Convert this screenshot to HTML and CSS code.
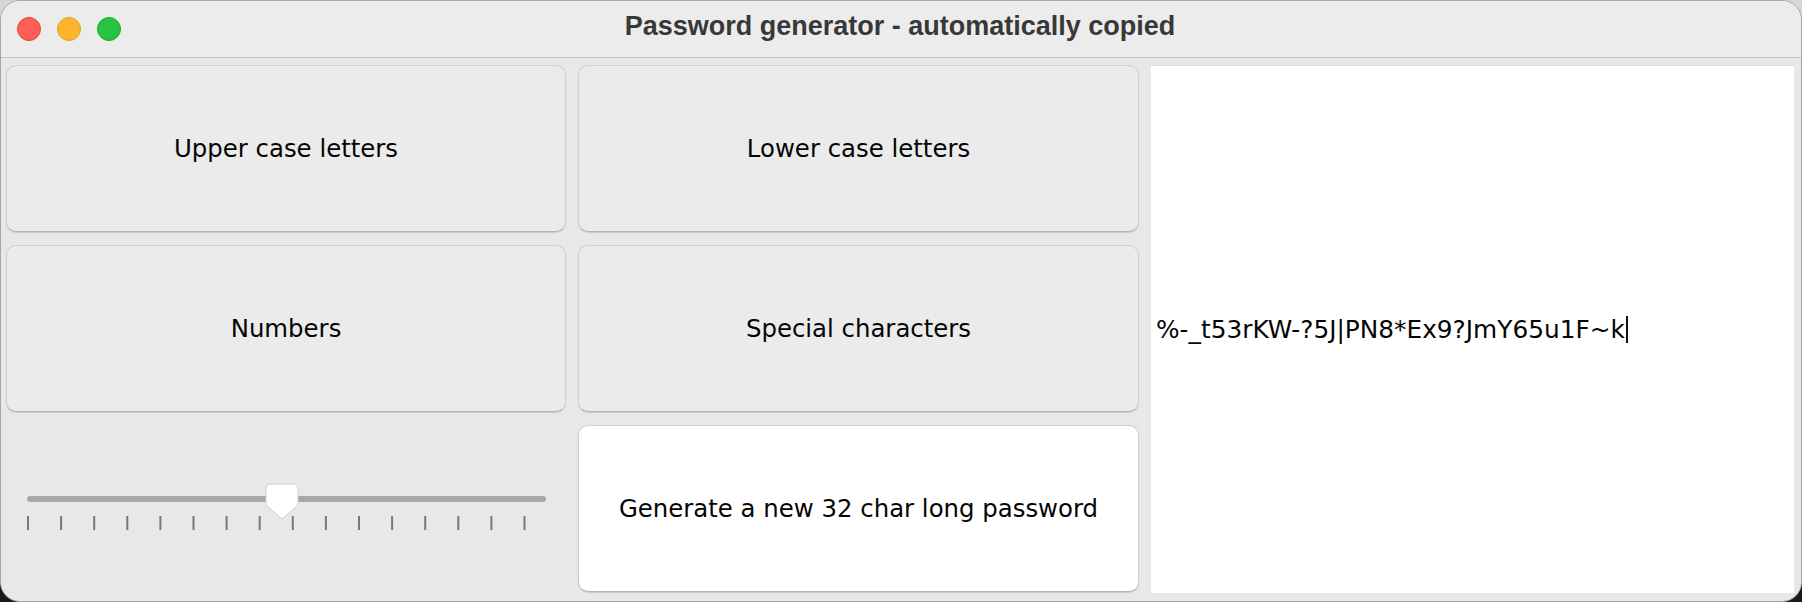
FILE: index.html
```html
<!DOCTYPE html>
<html>
<head>
<meta charset="utf-8">
<link rel="stylesheet" href="styles.css">
</head>
<body>
<div class="window">
  <div class="titlebar">
    <div class="lights">
      <span class="light red"></span>
      <span class="light yellow"></span>
      <span class="light green"></span>
    </div>
    <div class="title">Password generator - automatically copied</div>
  </div>
  <div class="content">
    <div class="btn">Upper case letters</div>
    <div class="btn">Lower case letters</div>
    <div class="output"><span class="pw">%-_t53rKW-?5J|PN8*Ex9?JmY65u1F~k</span><span class="caret"></span></div>
    <div class="btn">Numbers</div>
    <div class="btn">Special characters</div>
    <div class="slider">
      <svg width="560" height="167" viewBox="0 0 560 167">
        <line x1="24" y1="74" x2="537" y2="74" stroke="#a8a8a8" stroke-width="6" stroke-linecap="round"/>
        <g stroke="#787878" stroke-width="2">
          <line x1="22" y1="91" x2="22" y2="105"/>
          <line x1="55.1" y1="91" x2="55.1" y2="105"/>
          <line x1="88.2" y1="91" x2="88.2" y2="105"/>
          <line x1="121.3" y1="91" x2="121.3" y2="105"/>
          <line x1="154.4" y1="91" x2="154.4" y2="105"/>
          <line x1="187.5" y1="91" x2="187.5" y2="105"/>
          <line x1="220.6" y1="91" x2="220.6" y2="105"/>
          <line x1="253.7" y1="91" x2="253.7" y2="105"/>
          <line x1="286.8" y1="91" x2="286.8" y2="105"/>
          <line x1="319.9" y1="91" x2="319.9" y2="105"/>
          <line x1="353" y1="91" x2="353" y2="105"/>
          <line x1="386.1" y1="91" x2="386.1" y2="105"/>
          <line x1="419.2" y1="91" x2="419.2" y2="105"/>
          <line x1="452.3" y1="91" x2="452.3" y2="105"/>
          <line x1="485.4" y1="91" x2="485.4" y2="105"/>
          <line x1="518.5" y1="91" x2="518.5" y2="105"/>
        </g>
        <path d="M260 64 Q260 59 265 59 L287 59 Q292 59 292 64 L292 80 L276 94 L260 80 Z" fill="#ffffff" stroke="#cfcfcf" stroke-width="1"/>
      </svg>
    </div>
    <div class="btn btn-primary">Generate a new 32 char long password</div>
  </div>
</div>
</body>
</html>
```

FILE: styles.css
```css
* { box-sizing: border-box; }
html, body {
  margin: 0;
  padding: 0;
}
body {
  width: 1802px;
  height: 602px;
  background: linear-gradient(#d6d6d6, #d6d6d6 50%, #1a1a1a 51%, #1a1a1a);
  overflow: hidden;
}
.window {
  width: 1802px;
  height: 602px;
  border: 1px solid #a6a6a6;
  border-radius: 20px;
  overflow: hidden;
  background: #e8e8e8;
  display: flex;
  flex-direction: column;
}
.titlebar {
  height: 57px;
  flex: none;
  background: #edecec;
  border-bottom: 1px solid #c4c4c4;
  display: flex;
  align-items: center;
  justify-content: center;
  position: relative;
}
.lights {
  position: absolute;
  left: 16px;
  top: 16px;
  display: flex;
  gap: 16px;
}
.light {
  width: 24px;
  height: 24px;
  border-radius: 50%;
  display: block;
}
.red { background: #fe5f57; border: 1px solid #e2463f; }
.yellow { background: #feb52c; border: 1px solid #dfa023; }
.green { background: #28c33f; border: 1px solid #1eaa2f; }
.title {
  font-family: "Liberation Sans", Arial, sans-serif;
  font-weight: bold;
  font-size: 27px;
  color: #383838;
  line-height: 50px;
  padding-bottom: 7px;
  margin-left: -2px;
}
.content {
  flex: 1;
  display: grid;
  grid-template-columns: 560px 561px 1fr;
  grid-template-rows: 167px 167px 167px;
  column-gap: 12px;
  row-gap: 13px;
  padding: 7px 7px 0 5px;
}
.btn {
  background: #ebebeb;
  border: 1px solid #cfcfcf;
  border-bottom-color: #b4b4b4;
  border-radius: 10px;
  box-shadow: 0 1px 1px rgba(0,0,0,0.12);
  display: flex;
  align-items: center;
  justify-content: center;
  font-family: "DejaVu Sans", sans-serif;
  font-size: 24.4px;
  color: #050505;
}
.btn-primary {
  background: #ffffff;
}
.output {
  grid-column: 3;
  grid-row: 1 / 4;
  background: #ffffff;
  border-top: 1px solid #dedede;
  display: flex;
  align-items: center;
  padding-left: 5px;
  height: 528px;
  font-family: "DejaVu Sans", sans-serif;
  font-size: 24.8px;
  color: #050505;
}
.caret {
  display: inline-block;
  width: 2px;
  height: 27px;
  background: #111;
  margin-left: 1px;
}
.slider {
  display: block;
}
.slider svg {
  display: block;
}
```
